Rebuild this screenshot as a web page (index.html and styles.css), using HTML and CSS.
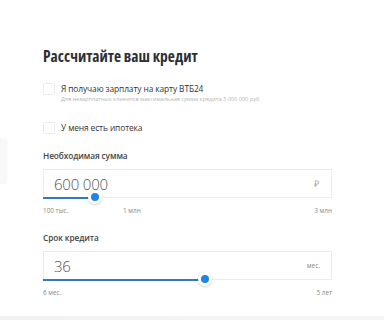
FILE: index.html
```html
<!DOCTYPE html>
<html>
<head>
  <meta charset="UTF-8" />
  <title>Рассчитайте ваш кредит</title>
  <link rel="stylesheet" href="styles.css">
</head>
<body>

  <div class="side-card"></div>

  <div class="calc">
    <h1 class="calc-title">Рассчитайте ваш кредит</h1>

    <label class="check">
      <span class="check-box"></span>
      <span class="check-text">
        <span class="check-label">Я получаю зарплату на карту ВТБ24</span>
        <span class="check-hint">Для незарплатных клиентов максимальная сумма кредита 3 000 000 руб</span>
      </span>
    </label>

    <label class="check check-single">
      <span class="check-box"></span>
      <span class="check-text">
        <span class="check-label">У меня есть ипотека</span>
      </span>
    </label>

    <div class="field">
      <div class="field-label">Необходимая сумма</div>
      <div class="field-box">
        <span class="field-value">600 000</span>
        <span class="field-unit">₽</span>
        <div class="track" style="width: 51px;"></div>
        <div class="thumb" style="left: 51px;"></div>
      </div>
      <div class="ticks">
        <span class="tick-first">100 тыс.</span>
        <span class="tick-mid">1 млн</span>
        <span class="tick-last">3 млн</span>
      </div>
    </div>

    <div class="field">
      <div class="field-label">Срок кредита</div>
      <div class="field-box">
        <span class="field-value">36</span>
        <span class="field-unit unit-text">мес.</span>
        <div class="track" style="width: 161px;"></div>
        <div class="thumb" style="left: 161px;"></div>
      </div>
      <div class="ticks">
        <span class="tick-first">6 мес.</span>
        <span class="tick-last">5 лет</span>
      </div>
    </div>
  </div>

  <div class="bottom-band"></div>

</body>
</html>
```

FILE: styles.css
```css
body {
  margin: 0;
  padding: 0;
  background: #ffffff;
  font-family: "Open Sans", "Liberation Sans", sans-serif;
  color: #333;
  width: 384px;
  height: 320px;
  overflow: hidden;
  position: relative;
}

.side-card {
  position: absolute;
  left: -40px;
  top: 138px;
  width: 47px;
  height: 46px;
  background: #f8f8f8;
  border-right: 1px solid #fcfcfc;
  border-radius: 4px;
}

.calc {
  padding: 45px 52px 0 43px;
}

.calc-title {
  margin: 0;
  font-family: "Open Sans", sans-serif;
  font-stretch: 79%;
  font-size: 15.5px;
  line-height: 22px;
  font-weight: 700;
  color: #2e2f33;
}

.check {
  display: flex;
  align-items: flex-start;
  margin-top: 16px;
}

.check-single {
  margin-top: 19px;
}

.check-box {
  width: 10px;
  height: 10px;
  border: 1px solid #ececec;
  border-radius: 2px;
  background: #fff;
  flex-shrink: 0;
}

.check-text {
  display: flex;
  flex-direction: column;
  margin-left: 6px;
}

.check-label {
  font-size: 8.4px;
  line-height: 11px;
  color: #333;
  letter-spacing: -0.1px;
}

.check-hint {
  font-size: 5.6px;
  line-height: 8px;
  color: #b5b5b5;
  margin-top: 1px;
}

.field {
  margin-top: 16px;
  width: 289px;
}

.field + .field {
  margin-top: 17px;
}

.field-label {
  font-size: 8.3px;
  line-height: 12px;
  font-weight: 600;
  color: #444;
  letter-spacing: -0.1px;
}

.field-box {
  position: relative;
  display: flex;
  align-items: center;
  justify-content: space-between;
  height: 27px;
  margin-top: 7px;
  border: 1px solid #ececec;
  padding: 0 12px 0 10px;
}

.field-value {
  font-size: 15px;
  font-weight: 300;
  color: #555;
  letter-spacing: -0.2px;
}

.field-unit {
  font-size: 9px;
  color: #aaa;
}

.unit-text {
  font-size: 6.5px;
  color: #888;
  margin-right: -1px;
}

.track {
  position: absolute;
  left: -1px;
  bottom: -2px;
  height: 2px;
  background: #3379bd;
}

.thumb {
  position: absolute;
  bottom: -7px;
  width: 8px;
  height: 8px;
  margin-left: -4px;
  border-radius: 50%;
  background: #1f86e3;
  border: 3px solid #fff;
  box-shadow: 0 1px 3px rgba(0, 0, 0, 0.18);
  transform: translateX(-3px);
}

.ticks {
  position: relative;
  display: flex;
  justify-content: space-between;
  margin-top: 9px;
  font-size: 6.4px;
  line-height: 8px;
  color: #888;
}

.tick-mid {
  position: absolute;
  left: 80px;
}

.bottom-band {
  position: absolute;
  left: 0;
  bottom: 0;
  width: 384px;
  height: 4px;
  background: linear-gradient(90deg, #f1f1f1, #f6f6f6);
}
```
